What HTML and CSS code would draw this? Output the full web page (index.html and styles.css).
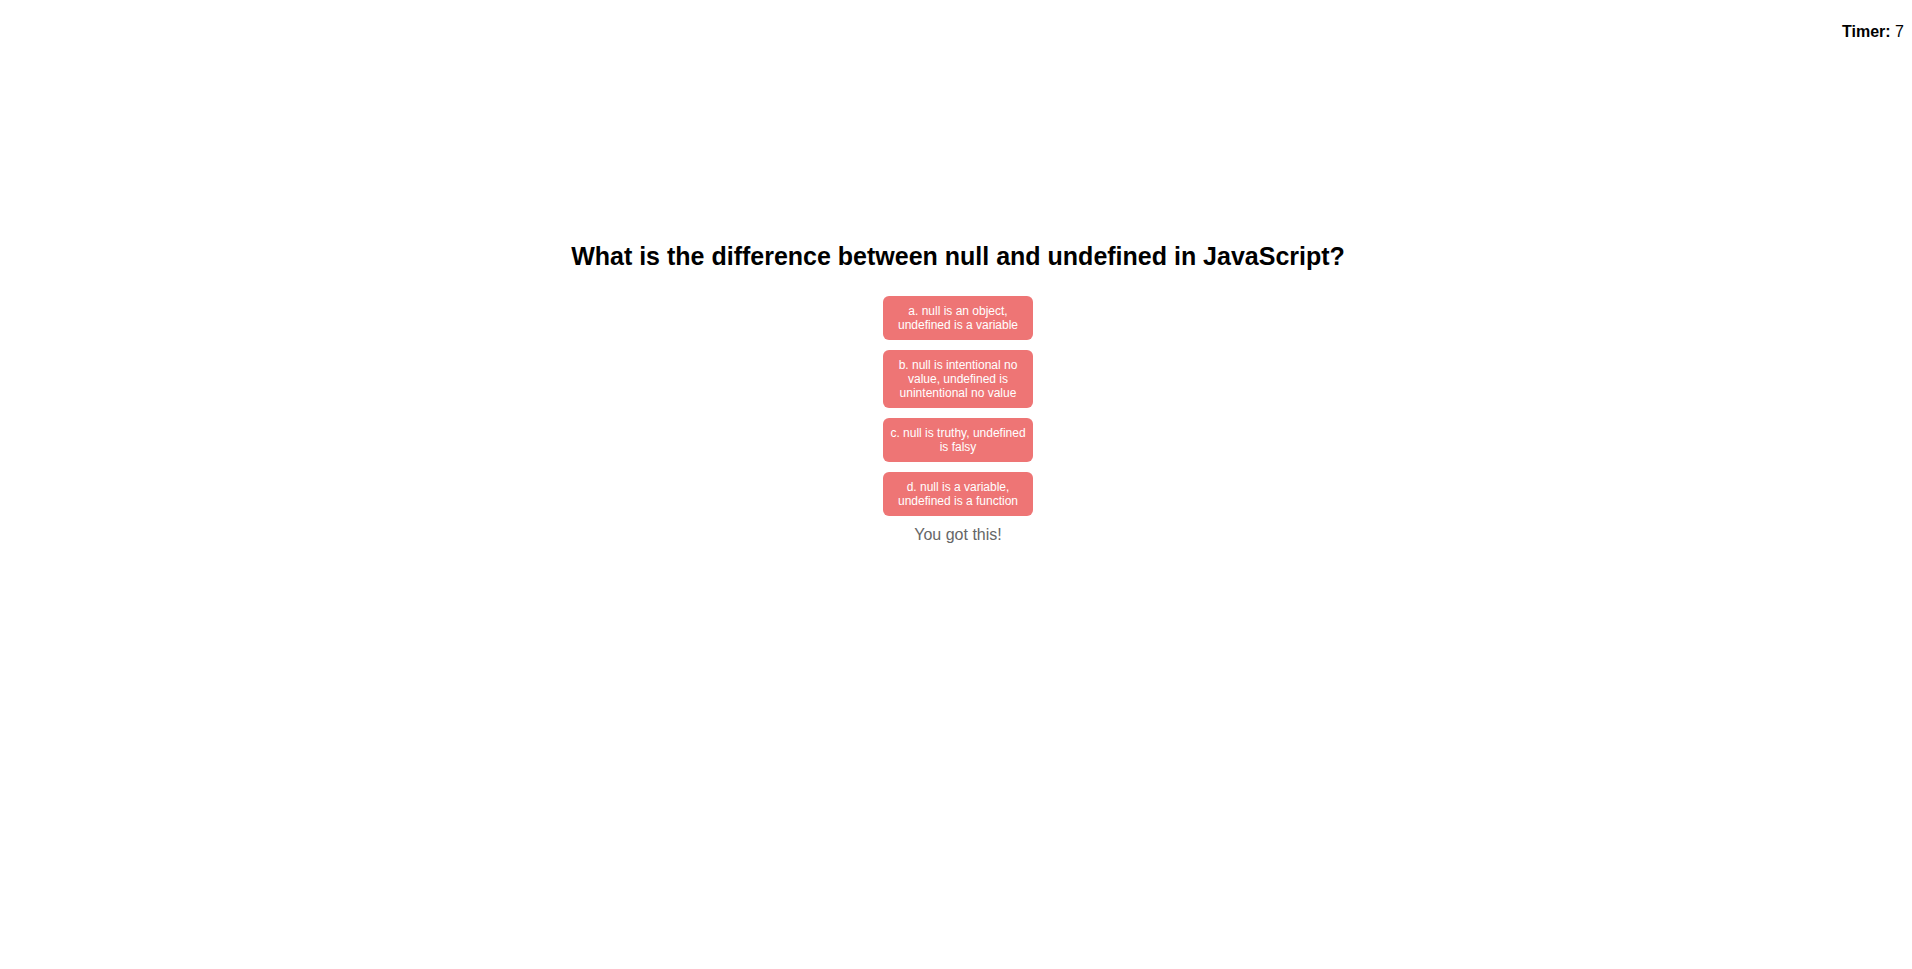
FILE: index.html
```html
<!DOCTYPE html>
<html lang="en">
<head>
<meta charset="utf-8">
<title>Quiz</title>
<link rel="stylesheet" href="styles.css">
</head>
<body>
<header class="header">
  <div class="timer"><strong>Timer:</strong> 7</div>
</header>
<main class="quiz">
  <h2 class="question">What is the difference between null and undefined in JavaScript?</h2>
  <div class="choices">
    <button class="choice">a. null is an object, undefined is a variable</button>
    <button class="choice">b. null is intentional no value, undefined is unintentional no value</button>
    <button class="choice">c. null is truthy, undefined is falsy</button>
    <button class="choice">d. null is a variable, undefined is a function</button>
    <p class="message">You got this!</p>
  </div>
</main>
</body>
</html>
```

FILE: styles.css
```css
html, body {
  margin: 0;
  padding: 0;
  background: #ffffff;
}

body {
  font-family: "Liberation Sans", Arial, sans-serif;
  color: #000000;
}

.header {
  display: flex;
  justify-content: flex-end;
  padding: 23px 8px 0 0;
}

.timer {
  font-size: 16px;
  line-height: 18px;
}

.timer strong {
  font-weight: bold;
}

.quiz {
  display: flex;
  flex-direction: column;
  align-items: center;
  padding-top: 201px;
  padding-left: 4px;
}

.question {
  margin: 0 0 25px 0;
  font-size: 25px;
  font-weight: bold;
  line-height: 29px;
  text-align: center;
}

.choices {
  display: flex;
  flex-direction: column;
  align-items: center;
  gap: 10px;
}

.choice {
  box-sizing: border-box;
  width: 150px;
  padding: 8px 5px;
  border: none;
  border-radius: 6px;
  background: #ee7575;
  color: #ffffff;
  font-family: "Liberation Sans", Arial, sans-serif;
  font-size: 12px;
  line-height: normal;
  text-align: center;
  cursor: pointer;
}

.message {
  margin: 0;
  font-size: 16px;
  line-height: normal;
  color: #666666;
}
```
